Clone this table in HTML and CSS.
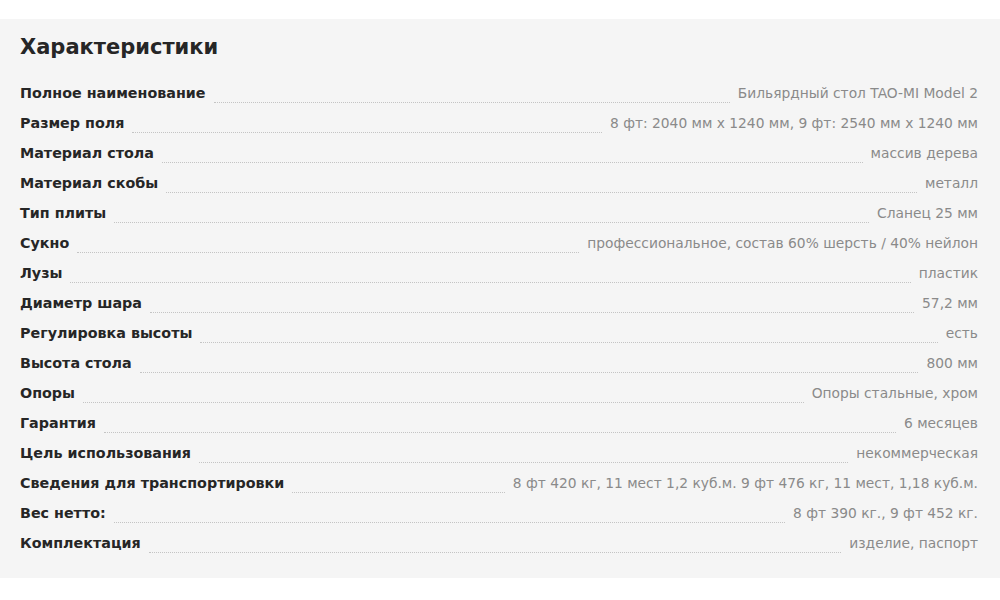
FILE: index.html
```html
<!DOCTYPE html>
<html lang="ru">
<head>
  <meta charset="UTF-8">
  <meta name="viewport" content="width=device-width, initial-scale=1.0">
  <title>Характеристики</title>
  <link rel="stylesheet" href="styles.css">
</head>
<body>

  <section class="specs">
    <h2 class="specs-title">Характеристики</h2>

    <ul class="specs-list">
      <li class="spec"><span class="spec-name">Полное наименование</span><span class="spec-dots"></span><span class="spec-value">Бильярдный стол TAO-MI Model 2</span></li>
      <li class="spec"><span class="spec-name">Размер поля</span><span class="spec-dots"></span><span class="spec-value">8 фт: 2040 мм х 1240 мм, 9 фт: 2540 мм х 1240 мм</span></li>
      <li class="spec"><span class="spec-name">Материал стола</span><span class="spec-dots"></span><span class="spec-value">массив дерева</span></li>
      <li class="spec"><span class="spec-name">Материал скобы</span><span class="spec-dots"></span><span class="spec-value">металл</span></li>
      <li class="spec"><span class="spec-name">Тип плиты</span><span class="spec-dots"></span><span class="spec-value">Сланец 25 мм</span></li>
      <li class="spec"><span class="spec-name">Сукно</span><span class="spec-dots"></span><span class="spec-value">профессиональное, состав 60% шерсть / 40% нейлон</span></li>
      <li class="spec"><span class="spec-name">Лузы</span><span class="spec-dots"></span><span class="spec-value">пластик</span></li>
      <li class="spec"><span class="spec-name">Диаметр шара</span><span class="spec-dots"></span><span class="spec-value">57,2 мм</span></li>
      <li class="spec"><span class="spec-name">Регулировка высоты</span><span class="spec-dots"></span><span class="spec-value">есть</span></li>
      <li class="spec"><span class="spec-name">Высота стола</span><span class="spec-dots"></span><span class="spec-value">800 мм</span></li>
      <li class="spec"><span class="spec-name">Опоры</span><span class="spec-dots"></span><span class="spec-value">Опоры стальные, хром</span></li>
      <li class="spec"><span class="spec-name">Гарантия</span><span class="spec-dots"></span><span class="spec-value">6 месяцев</span></li>
      <li class="spec"><span class="spec-name">Цель использования</span><span class="spec-dots"></span><span class="spec-value">некоммерческая</span></li>
      <li class="spec"><span class="spec-name">Сведения для транспортировки</span><span class="spec-dots"></span><span class="spec-value">8 фт 420 кг, 11 мест 1,2 куб.м. 9 фт 476 кг, 11 мест, 1,18 куб.м.</span></li>
      <li class="spec"><span class="spec-name">Вес нетто:</span><span class="spec-dots"></span><span class="spec-value">8 фт 390 кг., 9 фт 452 кг.</span></li>
      <li class="spec"><span class="spec-name">Комплектация</span><span class="spec-dots"></span><span class="spec-value">изделие, паспорт</span></li>
    </ul>
  </section>

</body>
</html>
```

FILE: styles.css
```css
* {
  margin: 0;
  padding: 0;
  box-sizing: border-box;
}

body {
  font-family: 'DejaVu Sans', 'Liberation Sans', sans-serif;
  background: #fff;
  color: #222;
  padding-top: 19px;
}

.specs {
  background: #f5f5f5;
  padding: 14px 22px 25px 20px;
}

.specs-title {
  font-size: 21px;
  font-weight: 700;
  line-height: 28px;
  color: #262626;
  margin-bottom: 22px;
}

.specs-list {
  list-style: none;
  display: flex;
  flex-direction: column;
  gap: 10px;
}

.spec {
  display: flex;
  line-height: 20px;
}

.spec-name {
  font-size: 14.3px;
  font-weight: 700;
  color: #262626;
  white-space: nowrap;
}

.spec-dots {
  flex: 1;
  margin: 0 8px;
  border-bottom: 1px dotted #c4c4c4;
}

.spec-value {
  font-size: 13.8px;
  color: #8a8a8a;
  white-space: nowrap;
}
```
